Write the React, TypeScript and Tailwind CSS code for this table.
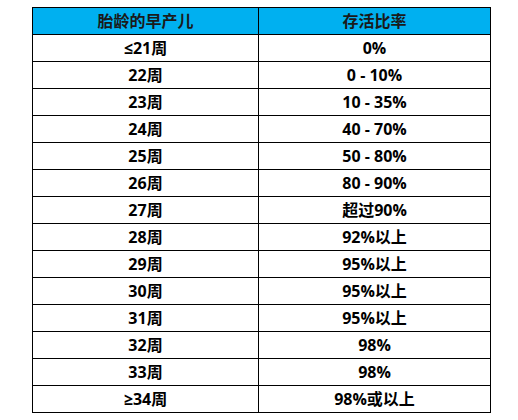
import React from "react";

const rows: [string, string][] = [
  ["≤21周", "0%"],
  ["22周", "0 - 10%"],
  ["23周", "10 - 35%"],
  ["24周", "40 - 70%"],
  ["25周", "50 - 80%"],
  ["26周", "80 - 90%"],
  ["27周", "超过90%"],
  ["28周", "92%以上"],
  ["29周", "95%以上"],
  ["30周", "95%以上"],
  ["31周", "95%以上"],
  ["32周", "98%"],
  ["33周", "98%"],
  ["≥34周", "98%或以上"],
];

export default function App() {
  return (
    <div
      className="w-[518px] h-[420px] bg-white pt-[7px] pl-[32px]"
      style={{ fontFamily: '"Open Sans", "Noto Sans CJK SC", sans-serif' }}
    >
      <div className="grid grid-cols-[226px_232px] w-[459px] border-l border-t border-black text-[16px] font-bold text-black">
        <div className="h-[27px] border-r border-b border-black bg-[#00b0f0] flex items-center justify-center text-[#1a1a1a] leading-none">
          胎龄的早产儿
        </div>
        <div className="h-[27px] border-r border-b border-black bg-[#00b0f0] flex items-center justify-center text-[#1a1a1a] leading-none">
          存活比率
        </div>
        {rows.map(([a, b], i) => (
          <React.Fragment key={i}>
            <div className="h-[27px] border-r border-b border-black flex items-center justify-center leading-none">
              {a}
            </div>
            <div className="h-[27px] border-r border-b border-black flex items-center justify-center leading-none">
              {b}
            </div>
          </React.Fragment>
        ))}
      </div>
    </div>
  );
}
